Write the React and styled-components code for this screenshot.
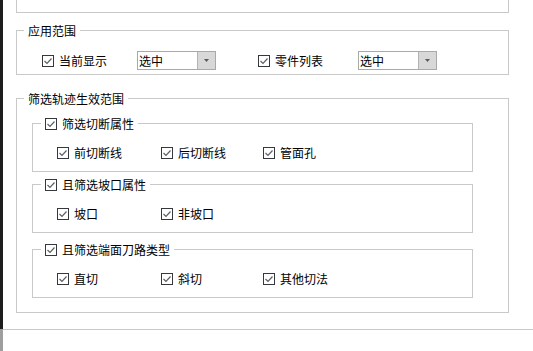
import React from 'react';
import styled, { createGlobalStyle } from 'styled-components';

const GlobalStyle = createGlobalStyle`
  html, body {
    margin: 0;
    padding: 0;
    background: #fff;
  }
  body {
    font-family: "Noto Sans CJK SC", "Noto Sans", sans-serif;
    font-size: 12px;
    color: #000;
  }
`;

const Window = styled.div`
  width: 533px;
  height: 351px;
  display: flex;
  flex-direction: column;
  overflow: hidden;
`;

const Main = styled.div`
  display: flex;
  height: 329px;
`;

const Strip = styled.div`
  width: 3px;
  flex: none;
  background: ${(p) => p.$color};
`;

const Content = styled.div`
  flex: 1;
  padding-left: 13px;
`;

const Footer = styled.div`
  flex: 1;
  display: flex;
`;

const FooterBar = styled.div`
  flex: 1;
  border-top: 1px solid #c9c9c9;
  background: #fff;
`;

const TopBox = styled.div`
  width: 493px;
  height: 13px;
  box-sizing: border-box;
  border: 1px solid #c9c9c9;
  border-top: none;
`;

const Group = styled.fieldset`
  margin: ${(p) => p.$mt}px 0 0 ${(p) => p.$ml || 0}px;
  padding: 0 0 ${(p) => p.$pb}px 0;
  width: ${(p) => p.$w}px;
  box-sizing: border-box;
  border: 1px solid #c9c9c9;
  min-inline-size: 0;
`;

const Legend = styled.legend`
  margin-left: ${(p) => p.$ml}px;
  padding: 0 4px;
  height: 15px;
  line-height: 15px;
  display: flex;
  align-items: center;
  gap: 5px;
  white-space: nowrap;
`;

const Row = styled.div`
  display: flex;
  align-items: center;
  margin-top: ${(p) => p.$mt}px;
  padding-left: ${(p) => p.$pl}px;
  height: ${(p) => p.$h}px;
`;

const Item = styled.label`
  display: flex;
  align-items: center;
  gap: 5px;
  width: ${(p) => (p.$w ? `${p.$w}px` : 'auto')};
  flex: none;
  white-space: nowrap;
  line-height: 16px;
`;

const Select = styled.div`
  width: 79px;
  height: 19px;
  box-sizing: border-box;
  border: 1px solid #a9a9a9;
  background: #fff;
  display: flex;
  margin-right: ${(p) => p.$mr || 0}px;
  flex: none;
`;

const SelectText = styled.span`
  flex: 1;
  padding-left: 1px;
  line-height: 17px;
`;

const SelectButton = styled.span`
  width: 17px;
  background: #d8d8d8;
  border-left: 1px solid #b3b3b3;
  display: flex;
  align-items: center;
  justify-content: center;
`;

const Check = () => (
  <svg width="12" height="12" viewBox="0 0 12 12">
    <rect x="0.5" y="0.5" width="11" height="11" fill="#fff" stroke="#35383d" />
    <path d="M2.5 6 L5 8.5 L9.5 3.5" fill="none" stroke="#5c5f64" strokeWidth="1.2" />
  </svg>
);

const Arrow = () => (
  <svg width="5" height="3" viewBox="0 0 5 3">
    <polygon points="0,0 5,0 2.5,3" fill="#5a5a5a" />
  </svg>
);

const Dropdown = ({ value, mr }) => (
  <Select $mr={mr}>
    <SelectText>{value}</SelectText>
    <SelectButton>
      <Arrow />
    </SelectButton>
  </Select>
);

const SubGroup = ({ title, items, mt }) => (
  <Group $mt={mt} $ml={15} $w={441} $pb={10}>
    <Legend $ml={8}>
      <Check />
      {title}
    </Legend>
    <Row $mt={14} $pl={24} $h={16}>
      {items.map((it, i) => (
        <Item key={it} $w={i === 0 ? 104 : i === 1 ? 102 : 0}>
          <Check />
          {it}
        </Item>
      ))}
    </Row>
  </Group>
);

export default function App() {
  return (
    <Window>
      <GlobalStyle />
      <Main>
        <Strip $color="#1c1c1c" />
        <Content>
          <TopBox />
          <Group $mt={10} $w={493} $pb={4}>
            <Legend $ml={7}>应用范围</Legend>
            <Row $mt={13} $pl={25} $h={19}>
              <Item $w={95}>
                <Check />
                当前显示
              </Item>
              <Dropdown value="选中" mr={42} />
              <Item $w={100}>
                <Check />
                零件列表
              </Item>
              <Dropdown value="选中" />
            </Row>
          </Group>
          <Group $mt={16} $w={493} $pb={14}>
            <Legend $ml={7}>筛选轨迹生效范围</Legend>
            <SubGroup mt={10} title="筛选切断属性" items={['前切断线', '后切断线', '管面孔']} />
            <SubGroup mt={5} title="且筛选坡口属性" items={['坡口', '非坡口']} />
            <SubGroup mt={9} title="且筛选端面刀路类型" items={['直切', '斜切', '其他切法']} />
          </Group>
        </Content>
      </Main>
      <Footer>
        <Strip $color="#9e9e9e" />
        <FooterBar />
      </Footer>
    </Window>
  );
}
